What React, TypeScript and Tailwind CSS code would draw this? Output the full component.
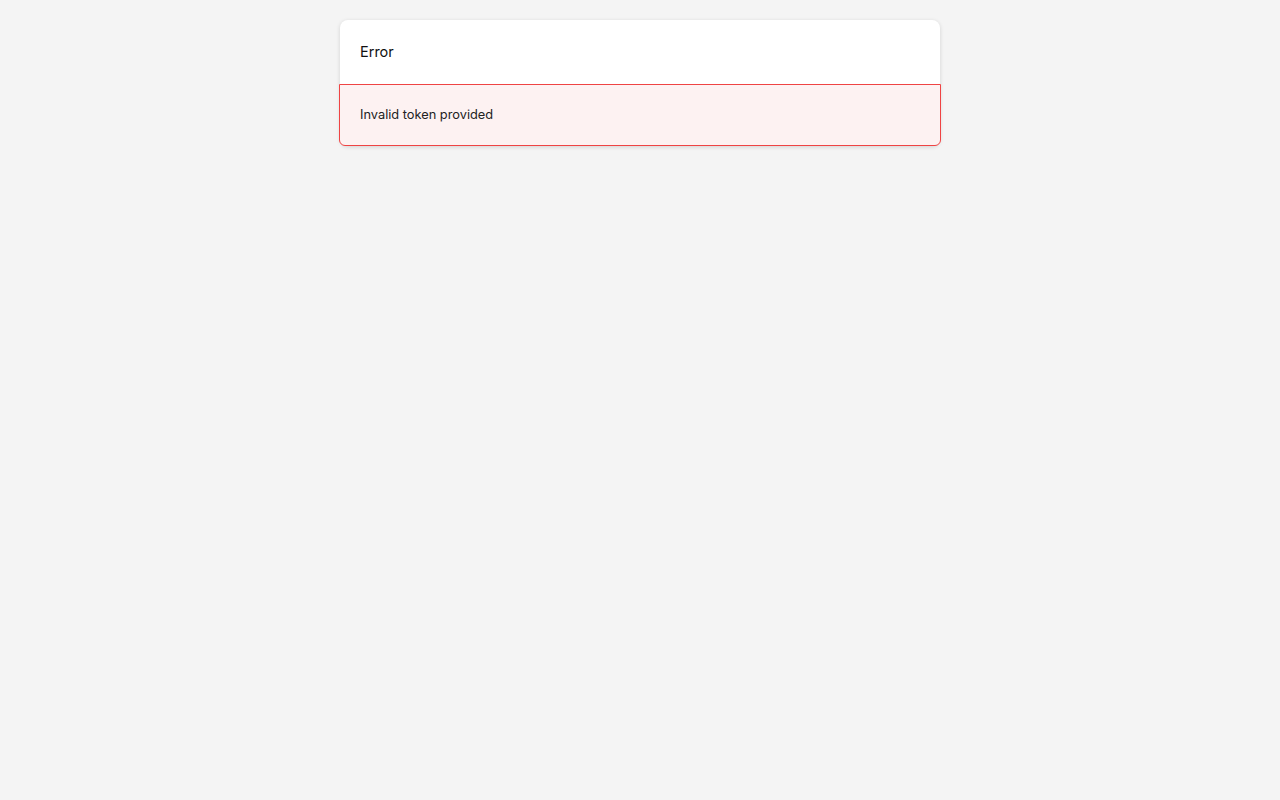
export default function App() {
  return (
    <div
      className="min-h-screen bg-[#f4f4f4] pt-5"
      style={{ fontFamily: "Inter, 'Noto Sans', sans-serif" }}
    >
      <div className="mx-auto w-[600px] rounded-lg bg-white shadow-[0_1px_4px_rgba(0,0,0,0.14)]">
        <div className="px-5 py-5 text-[14.5px] leading-6 text-[#111]">Error</div>
        <div className="-mx-px rounded-b-md border border-[#ef4444] bg-[#fdf2f2] px-5 py-5 text-[12.8px] leading-[20px] text-[#222]">
          Invalid token provided
        </div>
      </div>
    </div>
  )
}
